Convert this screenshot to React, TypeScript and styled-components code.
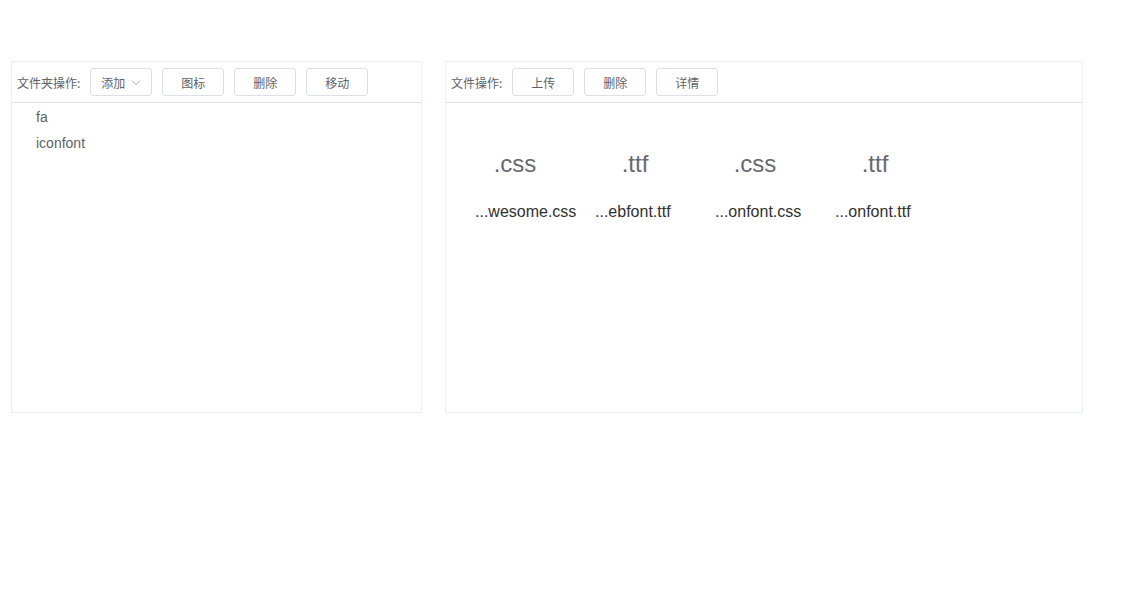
import React from "react";
import styled, { createGlobalStyle } from "styled-components";

const GlobalStyle = createGlobalStyle`
  html, body {
    margin: 0;
    padding: 0;
    background: #fff;
    font-family: "Liberation Sans", Arial, "Noto Sans CJK SC", sans-serif;
  }
`;

const Page = styled.div`
  display: flex;
  align-items: flex-start;
  gap: 23px;
  padding: 61px 0 0 11px;
`;

const Panel = styled.div<{ w: number }>`
  width: ${p => p.w}px;
  height: 352px;
  box-sizing: border-box;
  border: 1px solid #ebeef5;
  display: flex;
  flex-direction: column;
`;

const Toolbar = styled.div`
  height: 41px;
  box-sizing: border-box;
  border-bottom: 1px solid #d8e2ec;
  display: flex;
  align-items: center;
  padding-left: 5px;
  gap: 10px;
`;

const Label = styled.span`
  font-family: "Noto Sans CJK SC", sans-serif;
  font-size: 12px;
  color: #606266;
`;

const Button = styled.button`
  width: 62px;
  height: 28px;
  box-sizing: border-box;
  border: 1px solid #dcdfe6;
  border-radius: 3px;
  background: #fff;
  color: #606266;
  font-family: "Noto Sans CJK SC", sans-serif;
  font-size: 12px;
  padding: 0;
  display: inline-flex;
  align-items: center;
  justify-content: center;
  gap: 6px;
  cursor: pointer;
`;

const Chevron = () => (
  <svg width="10" height="10" viewBox="0 0 10 10">
    <path d="M1 3.5 L5 7.5 L9 3.5" fill="none" stroke="#a8abb2" strokeWidth="1" />
  </svg>
);

const Tree = styled.ul`
  list-style: none;
  margin: 0;
  padding: 1px 0 0 24px;
`;

const TreeItem = styled.li`
  height: 26px;
  line-height: 26px;
  font-size: 14px;
  color: #606266;
`;

const FileGrid = styled.div`
  display: flex;
  padding: 21px 0 0 29px;
`;

const FileItem = styled.div`
  width: 120px;
  display: flex;
  flex-direction: column;
`;

const Ext = styled.div`
  width: 80px;
  height: 80px;
  display: flex;
  align-items: center;
  justify-content: center;
  font-size: 24px;
  color: #666a70;
`;

const FileName = styled.div`
  font-size: 16px;
  line-height: 16px;
  color: #303133;
  white-space: nowrap;
`;

const files = [
  { ext: ".css", name: "...wesome.css" },
  { ext: ".ttf", name: "...ebfont.ttf" },
  { ext: ".css", name: "...onfont.css" },
  { ext: ".ttf", name: "...onfont.ttf" },
];

export default function App() {
  return (
    <>
      <GlobalStyle />
      <Page>
        <Panel w={411}>
          <Toolbar>
            <Label>文件夹操作:</Label>
            <Button>
              添加 <Chevron />
            </Button>
            <Button>图标</Button>
            <Button>删除</Button>
            <Button>移动</Button>
          </Toolbar>
          <Tree>
            <TreeItem>fa</TreeItem>
            <TreeItem>iconfont</TreeItem>
          </Tree>
        </Panel>
        <Panel w={638}>
          <Toolbar>
            <Label>文件操作:</Label>
            <Button>上传</Button>
            <Button>删除</Button>
            <Button>详情</Button>
          </Toolbar>
          <FileGrid>
            {files.map((f, i) => (
              <FileItem key={i}>
                <Ext>{f.ext}</Ext>
                <FileName>{f.name}</FileName>
              </FileItem>
            ))}
          </FileGrid>
        </Panel>
      </Page>
    </>
  );
}
